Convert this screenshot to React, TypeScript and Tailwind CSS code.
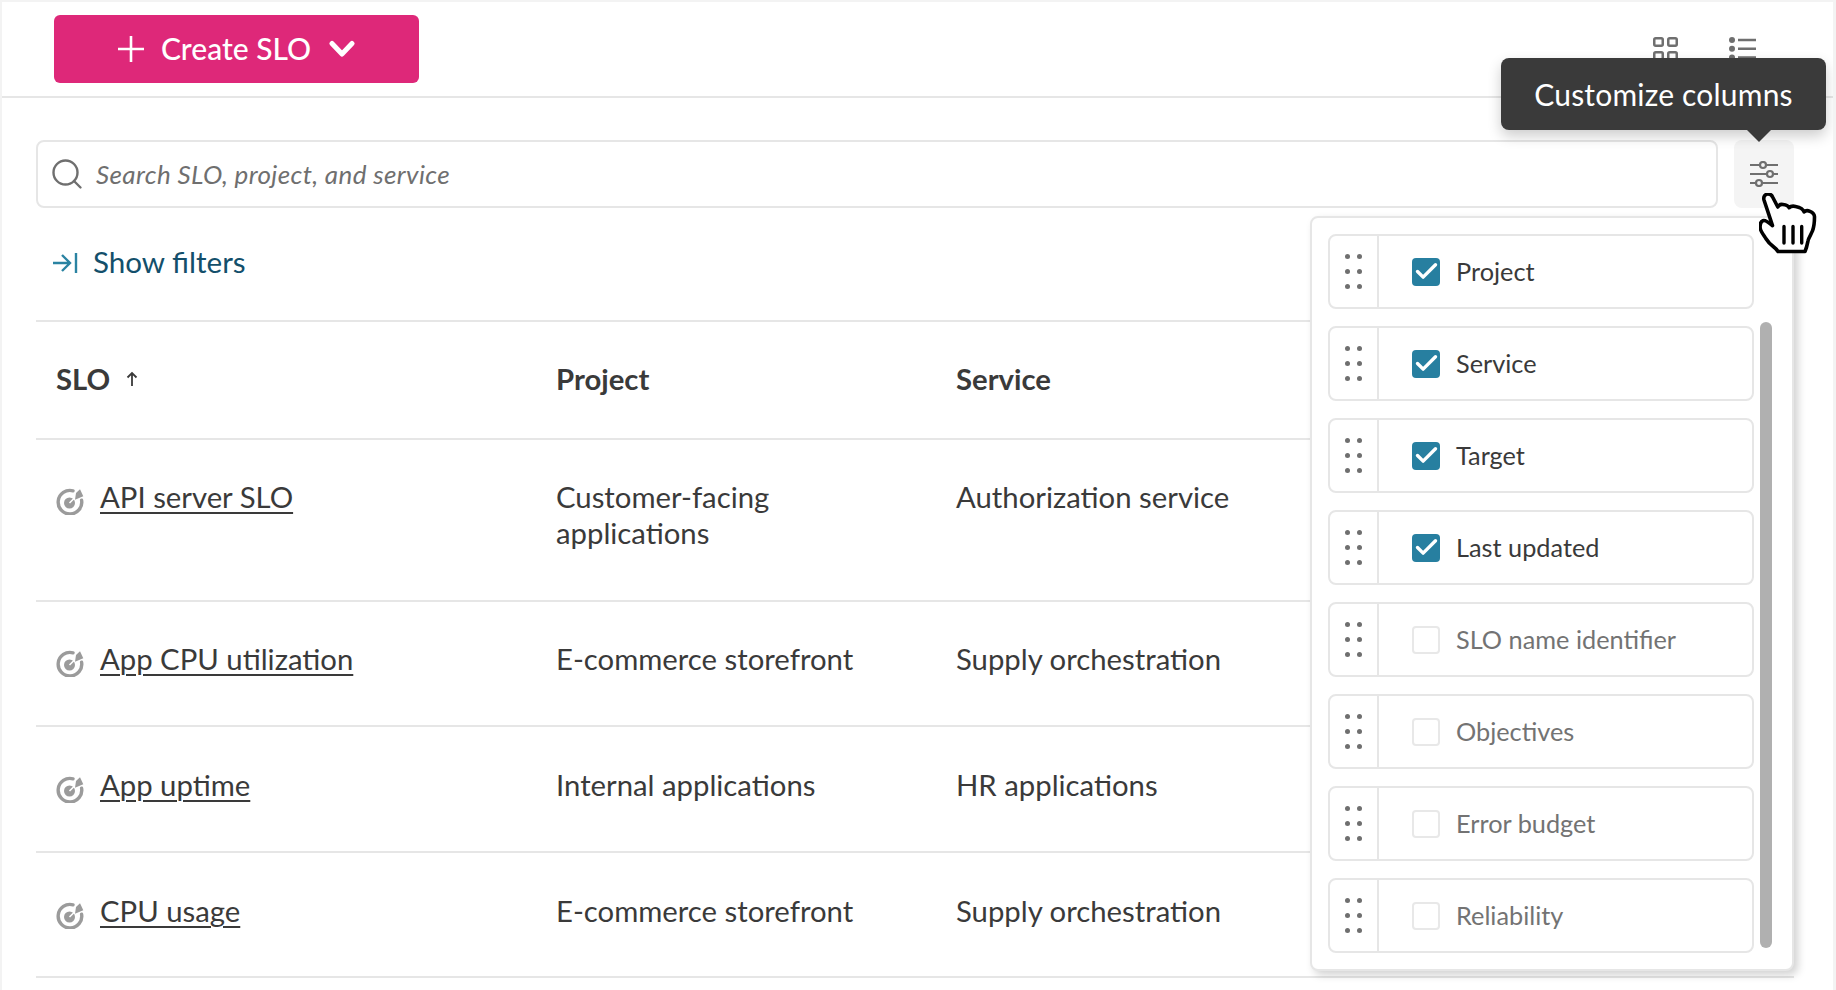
import { Search, Check } from "lucide-react";

const rows = [
  { name: "API server SLO", project: "Customer-facing applications", service: "Authorization service", pad: "pt-[39px] pb-[49px]" },
  { name: "App CPU utilization", project: "E-commerce storefront", service: "Supply orchestration", pad: "pt-[39px] pb-[48px]" },
  { name: "App uptime", project: "Internal applications", service: "HR applications", pad: "pt-[40px] pb-[48px]" },
  { name: "CPU usage", project: "E-commerce storefront", service: "Supply orchestration", pad: "pt-[40px] pb-[47px]" },
];

const columns = [
  { label: "Project", checked: true },
  { label: "Service", checked: true },
  { label: "Target", checked: true },
  { label: "Last updated", checked: true },
  { label: "SLO name identifier", checked: false },
  { label: "Objectives", checked: false },
  { label: "Error budget", checked: false },
  { label: "Reliability", checked: false },
];

const TargetIcon = () => (
  <svg width="28" height="28" viewBox="0 0 28 28" fill="none" className="shrink-0">
    <path d="M17 3.800A11.800 11.800 0 1 0 25.600 13.200" stroke="#9b9b9b" strokeWidth="3.400" strokeLinecap="round" />
    <circle cx="13.500" cy="16" r="5.500" fill="#9b9b9b" />
    <path d="M13.500 16 19 10.500" stroke="#fff" strokeWidth="1.600" />
    <path d="M24 2.300 27.300 9.300 19 12.700 20 6Z" fill="#9b9b9b" />
  </svg>
);

const DragDots = () => (
  <div className="grid grid-cols-2 gap-x-[7px] gap-y-[10px]">
    {[0, 1, 2, 3, 4, 5].map((i) => (
      <span key={i} className="w-[5px] h-[5px] rounded-full bg-[#6f6f6f]" />
    ))}
  </div>
);

const HandCursor = () => (
  <svg width="58" height="62" viewBox="0 0 58 62" className="absolute left-[1757px] top-[191px]">
    <path
      d="M5 7C4 3.500 6.500 1 9 1c2.200 0 3.800 1 4.600 3L18.800 14c1.200-2.500 3-2.800 5-2.500 3 .4 5.500 1 6.400 3.200 1.500-1.600 3.800-1.800 6.300-1.300 4.500.8 7.600 2.200 8.500 5.500 1.500-1.400 3.500-1.600 6-.6 3 1.200 4.500 2.400 4.500 5.500 0 5-.8 11-2 14-1 3-4 7-4.500 10-.4 2-1 6-3 10.700H19c-1-1.700-2.500-3.200-4.500-4.700-3-2.300-5.500-4.700-7.500-8-2-3.300-5.500-7.500-5.800-10.700-.4-3.500.5-6.500 2.800-7.500 2-.8 5.500 1.500 9.500 5L5 7Z"
      fill="#fff"
      stroke="#000"
      strokeWidth="3.600"
      strokeLinejoin="round"
    />
    <path d="M25 33.500V50M34 33.500V50M42.700 33.500V50" stroke="#000" strokeWidth="3.400" strokeLinecap="round" />
  </svg>
);

export default function App() {
  return (
    <div className="relative w-[1836px] h-[990px] overflow-hidden bg-white border-t-2 border-l-2 border-r-[3px] border-[#f3f3f3] font-[Lato,sans-serif] text-[#3a3a3a]">
      {/* Top bar */}
      <div className="h-[96px] flex items-start justify-between pl-[52px] pr-[77px] border-b-2 border-[#e6e6e6]">
        <button className="mt-[13px] w-[365px] h-[68px] rounded-md bg-[#de2879] text-white flex items-center justify-center text-[30px] font-medium">
          <svg width="26" height="26" viewBox="0 0 26 26" fill="none" stroke="#fff" strokeWidth="2.600">
            <path d="M13 0v26M0 13h26" />
          </svg>
          <span className="ml-[17px] mr-[18px] -mt-[2px]">Create SLO</span>
          <svg width="26" height="18" viewBox="0 0 26 18" fill="none" stroke="#fff" strokeWidth="5" strokeLinecap="round" strokeLinejoin="round">
            <path d="M3 3.500 13 14 23 3.500" />
          </svg>
        </button>
        <div className="mt-[35px] flex gap-[51px]">
          <svg width="25" height="26" viewBox="0 0 25 26" fill="none" stroke="#6f6f6f" strokeWidth="2.500">
            <rect x="1.250" y="1.250" width="8.500" height="7.500" rx="1.500" />
            <rect x="15.250" y="1.250" width="8.500" height="7.500" rx="1.500" />
            <rect x="1.250" y="15.250" width="8.500" height="7.500" rx="1.500" />
            <rect x="15.250" y="15.250" width="8.500" height="7.500" rx="1.500" />
          </svg>
          <svg width="27" height="26" viewBox="0 0 27 26" fill="none" stroke="#6f6f6f" strokeWidth="2.500">
            <path d="M9 3h18M9 11.700h18M9 20.400h18" />
            <circle cx="3" cy="3" r="3" fill="#6f6f6f" stroke="none" />
            <circle cx="3" cy="11.700" r="3" fill="#6f6f6f" stroke="none" />
            <circle cx="3" cy="20.400" r="3" fill="#6f6f6f" stroke="none" />
          </svg>
        </div>
      </div>

      <div className="pl-[34px] w-[1792px]">
        {/* Search */}
        <div className="mt-[42px] flex gap-[16px]">
          <div className="w-[1682px] h-[68px] rounded-lg border-2 border-[#e6e6e6] flex items-center pl-[11px] gap-[11px]">
            <Search size={36} strokeWidth={1.600} color="#6f6f6f" />
            <span className="italic text-[26px] tracking-[0.37px] text-[#6f6f6f] mt-[1px]">Search SLO, project, and service</span>
          </div>
          <div className="w-[60px] h-[68px] rounded-lg bg-[#f4f4f4] flex items-center justify-center">
            <svg width="30" height="26" viewBox="0 0 30 26" fill="none" stroke="#6f6f6f" strokeWidth="2.200">
              <path d="M1 4h10M17 4h12M1 13h17M24 13h5M1 22h6M13 22h16" />
              <circle cx="14" cy="4" r="3" />
              <circle cx="21" cy="13" r="3" />
              <circle cx="10" cy="22" r="3" />
            </svg>
          </div>
        </div>

        {/* Filters */}
        <div className="h-[112px] flex items-center gap-[15px] pl-[16px] pb-[3px] text-[29.6px] text-[#134f6b]">
          <svg width="26" height="22" viewBox="0 0 26 22" fill="none" stroke="#2a83a2" strokeWidth="2.400">
            <path d="M1 11h16M10 3l8 8-8 8M24 1v20" />
          </svg>
          <span>Show filters</span>
        </div>

        {/* Table */}
        <div className="border-t-2 border-[#e6e6e6] text-[29.3px]">
          <div className="grid grid-cols-[500px_400px_1fr] h-[118px] items-center pl-[20px] pb-[2px] border-b-2 border-[#e6e6e6] font-bold">
            <div className="flex items-center gap-[16px]">
              SLO
              <svg width="12" height="16" viewBox="0 0 12 16" fill="none" stroke="#3a3a3a" strokeWidth="1.800">
                <path d="M6 15V2M1.500 6.500 6 2l4.500 4.500" />
              </svg>
            </div>
            <div>Project</div>
            <div>Service</div>
          </div>
          {rows.map((row) => (
            <div
              key={row.name}
              className={`grid grid-cols-[500px_400px_1fr] pl-[20px] leading-[36px] border-b-2 border-[#e6e6e6] ${row.pad}`}
            >
              <div className="flex items-start gap-[16px]">
                <div className="mt-[8px]">
                  <TargetIcon />
                </div>
                <span className="underline underline-offset-[4px] decoration-2">{row.name}</span>
              </div>
              <div className="w-[300px]">{row.project}</div>
              <div>{row.service}</div>
            </div>
          ))}
        </div>
      </div>

      {/* Columns popover */}
      <div className="absolute left-[1308px] top-[214px] w-[484px] h-[755px] rounded-lg border-2 border-[#e6e6e6] bg-white shadow-[4px_4px_8px_rgba(0,0,0,0.18)] pl-[16px] pt-[16px]">
        <div className="flex flex-col gap-[17px]">
          {columns.map((col) => (
            <div key={col.label} className="w-[426px] h-[75px] rounded-lg border-2 border-[#e6e6e6] flex">
              <div className="w-[49px] border-r-2 border-[#e6e6e6] flex items-center justify-center">
                <DragDots />
              </div>
              <div className="flex items-center pl-[33px] gap-[16px]">
                {col.checked ? (
                  <span className="w-[28px] h-[28px] rounded bg-[#277fa0] flex items-center justify-center">
                    <Check size={27} strokeWidth={3} color="#fff" />
                  </span>
                ) : (
                  <span className="w-[28px] h-[28px] rounded border-2 border-[#e8e8e8]" />
                )}
                <span className={`text-[25.3px] ${col.checked ? "text-[#3a3a3a]" : "text-[#737373]"}`}>{col.label}</span>
              </div>
            </div>
          ))}
        </div>
        <div className="absolute left-[448px] top-[104px] w-[12px] h-[626px] rounded-full bg-[#b0b0b0]" />
      </div>

      {/* Tooltip */}
      <div className="absolute left-[1499px] top-[56px] w-[325px] h-[72px] rounded-lg bg-[#3a3a3a] text-white text-[30px] tracking-[0.2px] flex items-center justify-center shadow-[0_6px_14px_rgba(0,0,0,0.2)]">
        Customize columns
        <span className="absolute left-[246px] top-[72px] w-0 h-0 border-x-[12px] border-x-transparent border-t-[12px] border-t-[#3a3a3a]" />
      </div>

      <HandCursor />
    </div>
  );
}
